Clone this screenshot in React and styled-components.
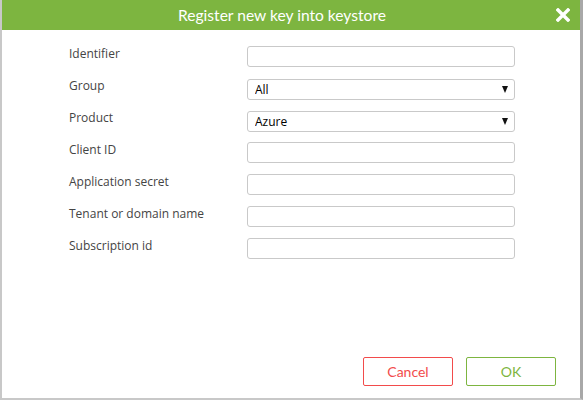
import React, { useState } from 'react';
import styled, { createGlobalStyle } from 'styled-components';

const GlobalStyle = createGlobalStyle`
  html, body {
    margin: 0;
    padding: 0;
    background: #fff;
  }
  body {
    font-family: "Open Sans", "Liberation Sans", sans-serif;
  }
  * {
    box-sizing: border-box;
  }
`;

const Dialog = styled.div`
  width: 583px;
  height: 400px;
  display: flex;
  flex-direction: column;
  background: #fff;
  border-left: 2px solid #c8c8c8;
  border-right: 3px solid #a8a8a8;
  border-bottom: 2px solid #c8c8c8;
`;

const Header = styled.div`
  height: 30px;
  flex: none;
  background: #7db540;
  display: flex;
  align-items: center;
  justify-content: center;
  position: relative;
  padding-right: 18px;
`;

const Title = styled.h1`
  margin: 0;
  font-family: Lato, "Open Sans", sans-serif;
  font-weight: 400;
  font-size: 15.6px;
  color: #fff;
`;

const CloseButton = styled.button`
  position: absolute;
  right: 10px;
  top: 8px;
  width: 14px;
  height: 14px;
  padding: 0;
  border: none;
  background: none;
  cursor: pointer;
  display: flex;
  align-items: center;
  justify-content: center;
`;

const Form = styled.div`
  flex: 1;
  display: grid;
  grid-template-columns: 178px 268px;
  grid-auto-rows: 32px;
  align-content: start;
  padding: 15px 0 0 67px;
`;

const Label = styled.label`
  font-size: 12px;
  color: #444;
  line-height: 16px;
  padding-top: 1px;
`;

const Field = styled.div`
  position: relative;
  padding-top: ${p => (p.$select ? 2 : 1)}px;
`;

const TextInput = styled.input`
  display: block;
  width: 268px;
  height: 21px;
  border: 1px solid #c9c9c9;
  border-radius: 3px;
  padding: 0 8px;
  font-family: "Open Sans", sans-serif;
  font-size: 12px;
  outline: none;
`;

const Select = styled.select`
  display: block;
  width: 268px;
  height: 21px;
  border: 1px solid #c9c9c9;
  border-radius: 3px;
  padding: 0 7px;
  font-family: "Open Sans", sans-serif;
  font-size: 12px;
  font-weight: 400;
  color: #000;
  background: #fff;
  appearance: none;
  outline: none;
`;

const Arrow = styled.span`
  position: absolute;
  right: 7px;
  top: 9px;
  width: 0;
  height: 0;
  border-left: 3.5px solid transparent;
  border-right: 3.5px solid transparent;
  border-top: 7px solid #111;
  pointer-events: none;
`;

const Footer = styled.div`
  display: flex;
  justify-content: flex-end;
  gap: 13px;
  padding: 0 24px 12px 0;
`;

const Button = styled.button`
  width: 90px;
  height: 29px;
  background: #fff;
  border: 1px solid ${p => p.$color};
  color: ${p => p.$color};
  border-radius: 2px;
  font-family: Lato, "Open Sans", sans-serif;
  font-size: 14px;
  cursor: pointer;
`;

const fields = [
  { label: 'Identifier' },
  { label: 'Group', options: ['All'] },
  { label: 'Product', options: ['Azure'] },
  { label: 'Client ID' },
  { label: 'Application secret' },
  { label: 'Tenant or domain name' },
  { label: 'Subscription id' },
];

export default function App() {
  const [values, setValues] = useState({});

  const update = (key, v) => setValues({ ...values, [key]: v });

  return (
    <>
      <GlobalStyle />
      <Dialog>
        <Header>
          <Title>Register new key into keystore</Title>
          <CloseButton aria-label="Close">
            <svg width="14" height="14" viewBox="0 0 14 14">
              <path d="M2 2 L12 12 M12 2 L2 12" stroke="#fff" strokeWidth="3.4" strokeLinecap="square" />
            </svg>
          </CloseButton>
        </Header>

        <Form>
          {fields.map(f => (
            <React.Fragment key={f.label}>
              <Label>{f.label}</Label>
              <Field $select={!!f.options}>
                {f.options ? (
                  <>
                    <Select value={values[f.label] || f.options[0]} onChange={e => update(f.label, e.target.value)}>
                      {f.options.map(o => (
                        <option key={o}>{o}</option>
                      ))}
                    </Select>
                    <Arrow />
                  </>
                ) : (
                  <TextInput value={values[f.label] || ''} onChange={e => update(f.label, e.target.value)} />
                )}
              </Field>
            </React.Fragment>
          ))}
        </Form>

        <Footer>
          <Button $color="#f24b4b">Cancel</Button>
          <Button $color="#7db540">OK</Button>
        </Footer>
      </Dialog>
    </>
  );
}
